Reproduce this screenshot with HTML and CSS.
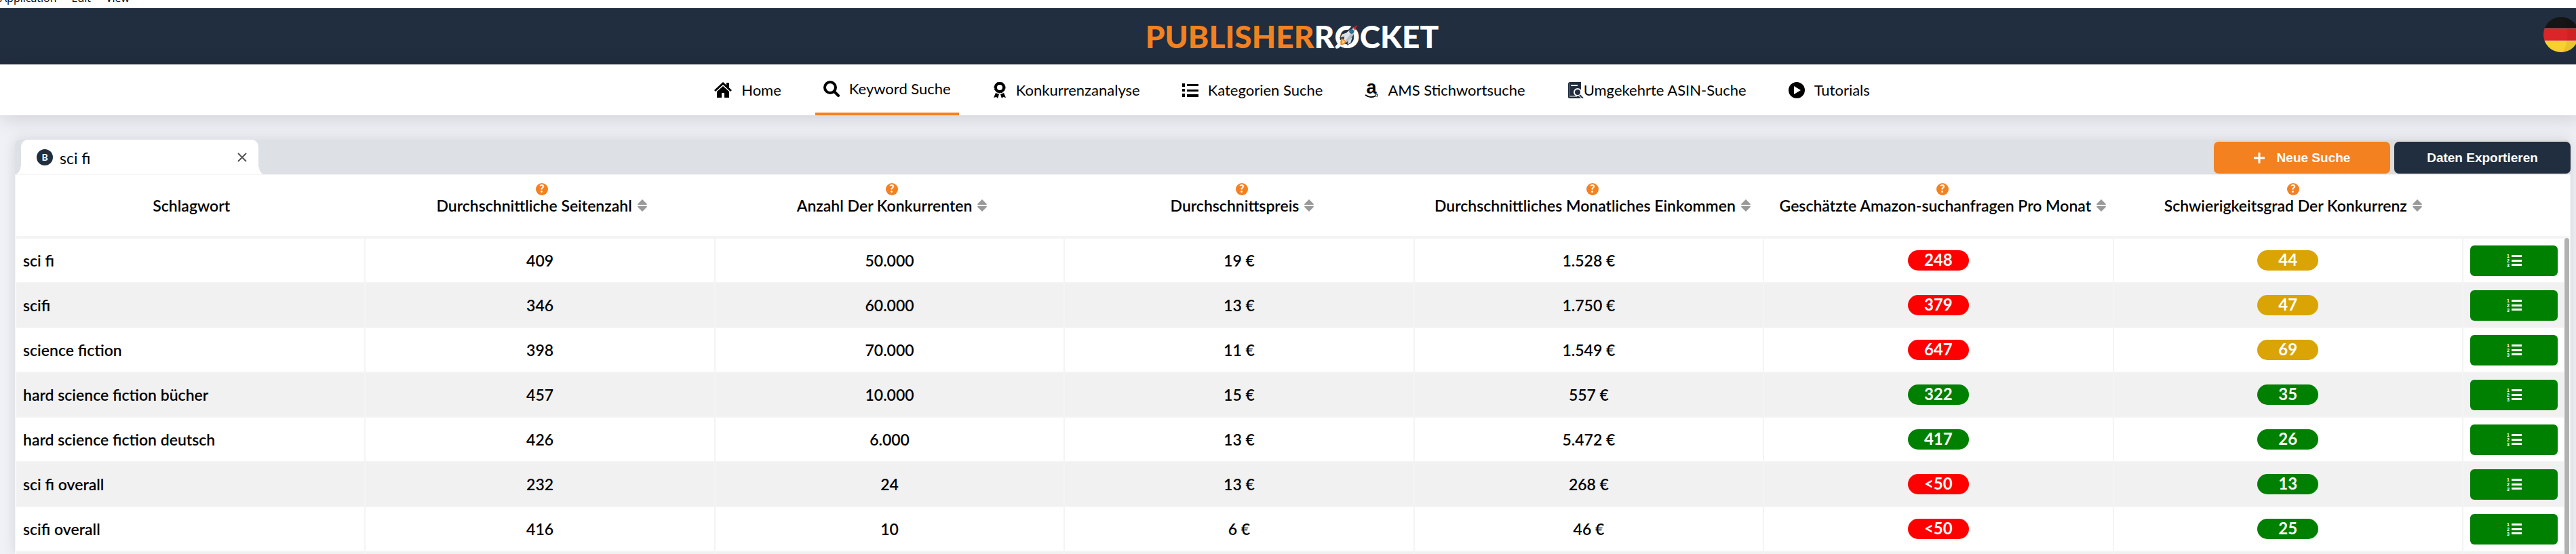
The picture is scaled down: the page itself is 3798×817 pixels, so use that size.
FILE: index.html
```html
<!DOCTYPE html>
<html lang="de">
<head>
  <meta charset="utf-8">
  <meta name="viewport" content="width=device-width, initial-scale=1">
  <title>Publisher Rocket</title>
  <link rel="stylesheet" href="styles.css">
</head>
<body>

  <!-- icons -->
  <svg class="sprite" aria-hidden="true">
    <symbol id="i-home" viewBox="0 0 26 24">
      <path d="M1 13 L13 2 L25 13" fill="none" stroke="currentColor" stroke-width="3"/>
      <path d="M18 1h4v8l-4-4z"/>
      <path d="M4 14 L13 6 L22 14 V23 H15 V16 H11 V23 H4z"/>
    </symbol>
    <symbol id="i-search" viewBox="0 0 24 24">
      <circle cx="10" cy="10" r="8" fill="none" stroke="currentColor" stroke-width="4"/>
      <path d="M16 16 L22 22" stroke="currentColor" stroke-width="4" stroke-linecap="round"/>
    </symbol>
    <symbol id="i-award" viewBox="0 0 20 24">
      <circle cx="10" cy="8" r="6" fill="none" stroke="currentColor" stroke-width="4"/>
      <circle cx="10" cy="8" r="8" fill="none" stroke="currentColor" stroke-width="1" stroke-dasharray="3 1"/>
      <path d="M4 16 L9 18 L7 24 L5 22 L1 23z M16 16 L11 18 L13 24 L15 22 L19 23z"/>
    </symbol>
    <symbol id="i-list" viewBox="0 0 24 24">
      <path d="M0 2h4v5H0z M0 10h4v4H0z M0 17h4v5H0z M7 3h17v3H7z M7 11h17v3H7z M7 18h17v4H7z"/>
    </symbol>
    <symbol id="i-amazon" viewBox="0 0 20 24">
      <text class="amazon-a" x="10" y="17" text-anchor="middle">a</text>
      <path d="M1 19 Q9 25 17 20" fill="none" stroke="currentColor" stroke-width="2"/>
      <path d="M15 18 H19 L18 22" fill="none" stroke="currentColor" stroke-width="1"/>
    </symbol>
    <symbol id="i-asin" viewBox="0 0 24 24">
      <path d="M1 3 Q1 0 4 0 H20 V24 H3 Q1 24 1 22z" fill="#212e3f"/>
      <path d="M3 2v18" stroke="#6d7784"/>
      <path d="M5 5h10" stroke="#fff" stroke-width="2"/>
      <path d="M3 21h11" stroke="#fff" stroke-width="1"/>
      <circle cx="15" cy="15" r="5" fill="#212e3f" stroke="#fff" stroke-width="2"/>
      <path d="M18 19 L23 24" stroke="#fff" stroke-width="4"/>
      <path d="M18 19 L23 24" stroke="#212e3f" stroke-width="2"/>
    </symbol>
    <symbol id="i-play" viewBox="0 0 24 24">
      <path fill-rule="evenodd" d="M12 0a12 12 0 1 0 0 24a12 12 0 1 0 0-24z M8 6L18 12L8 18z"/>
    </symbol>
    <symbol id="i-help" viewBox="0 0 18 18">
      <circle cx="9" cy="9" r="9" fill="#f48120"/>
      <text class="help-mark" x="9" y="14" text-anchor="middle">?</text>
    </symbol>
    <symbol id="i-sort" viewBox="0 0 14 18">
      <path d="M7 0L14 7Q14 8 13 8H1Q0 8 0 7z M7 18L14 11Q14 10 13 10H1Q0 10 0 11z"/>
    </symbol>
    <symbol id="i-list-ol" viewBox="0 0 22 20">
      <path d="M7 2h15v3H7z M7 9h15v3H7z M7 15h15v3H7z"/>
      <text class="ol-num" x="0" y="6">1</text>
      <text class="ol-num" x="0" y="13">2</text>
      <text class="ol-num" x="0" y="20">3</text>
    </symbol>
  </svg>

  <div class="menubar">
    <span>Application</span>
    <span>Edit</span>
    <span>View</span>
  </div>

  <header class="header">
    <div class="logo">
      <span class="logo-publisher">PUBLISHER</span><span>R</span><span class="logo-o">O<svg class="logo-rocket" viewBox="0 0 40 40">
          <path d="M2 35 Q1 40 7 38 L15 30 L10 26z" fill="#fff"/>
          <path d="M11 26 L30 6" stroke="#212e3f" stroke-width="7"/>
          <path d="M21 13 L12 16 L9 22 L18 20z M29 20 L26 30 L20 33 L22 24z" fill="#d6dbe1" stroke="#212e3f" stroke-width="1"/>
          <path d="M15 25 Q16 11 33 6 Q31 21 19 29z" fill="#dfe3e8"/>
          <path d="M19 29 Q31 21 33 6 L17 27z" fill="#b7bec7"/>
          <path d="M29 6 L36 2 L33 10z" fill="#c4202e"/>
          <circle cx="27" cy="12" r="3" fill="#1f7fa3" stroke="#15506b"/>
          <path d="M12 22 L19 28 Q17 33 10 33 Q9 26 12 22z" fill="#f48120"/>
          <path d="M13 25 L17 28 Q15 31 12 31z" fill="#ffd27a"/>
        </svg></span><span>CKET</span>
    </div>
    <svg class="flag" viewBox="0 0 52 52" role="img" aria-label="Deutsch">
      <clipPath id="flag-round"><circle cx="26" cy="26" r="26"/></clipPath>
      <g clip-path="url(#flag-round)">
        <path d="M0 0h52v17H0z" fill="#151515"/>
        <path d="M0 17h52v18H0z" fill="#db2629"/>
        <path d="M0 35h52v17H0z" fill="#f9d02e"/>
        <path d="M29 0 Q42 26 29 52 H52 V0z" fill="#000" opacity="0.06"/>
        <path d="M0 17h52M0 35h52" stroke="#fff" opacity="0.3"/>
      </g>
    </svg>
  </header>

  <nav class="nav">
    <a href="#" class="nav-item"><svg class="icon-wide"><use href="#i-home"/></svg><span>Home</span></a>
    <a href="#" class="nav-item active"><svg class="icon"><use href="#i-search"/></svg><span>Keyword Suche</span></a>
    <a href="#" class="nav-item"><svg class="icon-narrow"><use href="#i-award"/></svg><span>Konkurrenzanalyse</span></a>
    <a href="#" class="nav-item"><svg class="icon"><use href="#i-list"/></svg><span>Kategorien Suche</span></a>
    <a href="#" class="nav-item"><svg class="icon-narrow"><use href="#i-amazon"/></svg><span>AMS Stichwortsuche</span></a>
    <a href="#" class="nav-item tight"><svg class="icon"><use href="#i-asin"/></svg><span>Umgekehrte ASIN-Suche</span></a>
    <a href="#" class="nav-item"><svg class="icon"><use href="#i-play"/></svg><span>Tutorials</span></a>
  </nav>

  <main class="panel">
    <div class="tabbar">
      <div class="tab">
        <span class="tab-badge">B</span>
        <span class="tab-title">sci fi</span>
        <button class="tab-close" aria-label="Tab schließen">
          <svg viewBox="0 0 14 14"><path d="M1 1L13 13M13 1L1 13"/></svg>
        </button>
      </div>
      <div class="actions">
        <button class="btn btn-new">
          <svg viewBox="0 0 16 16"><path d="M8 1V15M1 8H15"/></svg>Neue Suche
        </button>
        <button class="btn btn-export">Daten Exportieren</button>
      </div>
    </div>

    <div class="results">
      <table>
        <thead>
          <tr>
            <th><span class="label">Schlagwort</span></th>
            <th><svg class="help"><use href="#i-help"/></svg><span class="label">Durchschnittliche Seitenzahl<svg class="sort"><use href="#i-sort"/></svg></span></th>
            <th><svg class="help"><use href="#i-help"/></svg><span class="label">Anzahl Der Konkurrenten<svg class="sort"><use href="#i-sort"/></svg></span></th>
            <th><svg class="help"><use href="#i-help"/></svg><span class="label">Durchschnittspreis<svg class="sort"><use href="#i-sort"/></svg></span></th>
            <th><svg class="help"><use href="#i-help"/></svg><span class="label">Durchschnittliches Monatliches Einkommen<svg class="sort"><use href="#i-sort"/></svg></span></th>
            <th><svg class="help"><use href="#i-help"/></svg><span class="label">Geschätzte Amazon-suchanfragen Pro Monat<svg class="sort"><use href="#i-sort"/></svg></span></th>
            <th><svg class="help"><use href="#i-help"/></svg><span class="label">Schwierigkeitsgrad Der Konkurrenz<svg class="sort"><use href="#i-sort"/></svg></span></th>
            <th></th>
          </tr>
        </thead>
        <tbody>
          <tr>
            <td>sci fi</td><td>409</td><td>50.000</td><td>19 €</td><td>1.528 €</td>
            <td><span class="pill red">248</span></td><td><span class="pill amber">44</span></td>
            <td><button class="analyze" aria-label="Analysieren"><svg><use href="#i-list-ol"/></svg></button></td>
          </tr>
          <tr>
            <td>scifi</td><td>346</td><td>60.000</td><td>13 €</td><td>1.750 €</td>
            <td><span class="pill red">379</span></td><td><span class="pill amber">47</span></td>
            <td><button class="analyze" aria-label="Analysieren"><svg><use href="#i-list-ol"/></svg></button></td>
          </tr>
          <tr>
            <td>science fiction</td><td>398</td><td>70.000</td><td>11 €</td><td>1.549 €</td>
            <td><span class="pill red">647</span></td><td><span class="pill amber">69</span></td>
            <td><button class="analyze" aria-label="Analysieren"><svg><use href="#i-list-ol"/></svg></button></td>
          </tr>
          <tr>
            <td>hard science fiction bücher</td><td>457</td><td>10.000</td><td>15 €</td><td>557 €</td>
            <td><span class="pill green">322</span></td><td><span class="pill green">35</span></td>
            <td><button class="analyze" aria-label="Analysieren"><svg><use href="#i-list-ol"/></svg></button></td>
          </tr>
          <tr>
            <td>hard science fiction deutsch</td><td>426</td><td>6.000</td><td>13 €</td><td>5.472 €</td>
            <td><span class="pill green">417</span></td><td><span class="pill green">26</span></td>
            <td><button class="analyze" aria-label="Analysieren"><svg><use href="#i-list-ol"/></svg></button></td>
          </tr>
          <tr>
            <td>sci fi overall</td><td>232</td><td>24</td><td>13 €</td><td>268 €</td>
            <td><span class="pill red">&lt;50</span></td><td><span class="pill green">13</span></td>
            <td><button class="analyze" aria-label="Analysieren"><svg><use href="#i-list-ol"/></svg></button></td>
          </tr>
          <tr>
            <td>scifi overall</td><td>416</td><td>10</td><td>6 €</td><td>46 €</td>
            <td><span class="pill red">&lt;50</span></td><td><span class="pill green">25</span></td>
            <td><button class="analyze" aria-label="Analysieren"><svg><use href="#i-list-ol"/></svg></button></td>
          </tr>
          <tr>
            <td></td><td></td><td></td><td></td><td></td><td></td><td></td><td></td>
          </tr>
        </tbody>
      </table>
      <div class="scrollbar"></div>
    </div>
  </main>

</body>
</html>
```
FILE: styles.css
```css
* {
  box-sizing: border-box;
}

body {
  display: flex;
  flex-direction: column;
  margin: 0;
  height: 100vh;
  overflow: hidden;
  background: #f0f1f7;
  color: #000;
  font-family: Lato, sans-serif;
  font-size: 24px;
  line-height: 30px;
}

button {
  border: 0;
  padding: 0;
  cursor: pointer;
}

svg {
  fill: currentColor;
  flex: none;
}

.sprite {
  display: none;
}

/* window menu */
.menubar {
  display: flex;
  flex: none;
  align-items: flex-end;
  gap: 22px;
  height: 12px;
  padding-bottom: 5px;
  overflow: hidden;
  background: #fff;
  font-family: "Open Sans", sans-serif;
  font-size: 16px;
  line-height: 20px;
}

/* header */
.header {
  display: grid;
  flex: none;
  grid-template-columns: 1fr auto 1fr;
  align-items: center;
  width: calc(100% + 12px);
  height: 83px;
  padding: 0 8px;
  background: #212e3f;
}

.logo {
  grid-column: 2;
  display: flex;
  color: #fff;
  font-size: 46px;
  font-weight: 900;
  line-height: 60px;
}

.logo-publisher {
  color: #f48120;
}

.logo-o {
  position: relative;
}

.logo-rocket {
  position: absolute;
  left: 0;
  top: 11px;
  width: 38px;
  height: 38px;
}

.flag {
  justify-self: end;
  align-self: start;
  width: 52px;
  height: 52px;
  margin-top: 13px;
}

/* navigation */
.nav {
  position: relative;
  display: flex;
  flex: none;
  justify-content: center;
  gap: 38px;
  width: calc(100% + 12px);
  height: 75px;
  background: #fff;
  box-shadow: 0 4px 32px rgba(0, 0, 0, 0.15);
  font-size: 22px;
}

.nav-item {
  display: flex;
  align-items: center;
  gap: 14px;
  padding: 0 12px;
  color: #000;
  text-decoration: none;
}

.nav-item.active {
  border-bottom: 4px solid #f48120;
}

.nav-item.tight {
  gap: 0;
}

.icon {
  width: 24px;
  height: 24px;
}

.icon-wide {
  width: 26px;
  height: 24px;
}

.icon-narrow {
  width: 20px;
  height: 24px;
}

.amazon-a {
  font: bold 27px "Liberation Sans", sans-serif;
}

.help-mark {
  fill: #fff;
  font: 900 16px Lato, sans-serif;
}

.ol-num {
  font: bold 7px "Liberation Sans", sans-serif;
}

/* panel */
.panel {
  display: flex;
  flex: 1;
  flex-direction: column;
  min-height: 0;
  margin: 36px 8px 0 22px;
  border-radius: 8px 8px 0 0;
  box-shadow: 0 0 20px rgba(0, 0, 0, 0.12);
}

.tabbar {
  display: flex;
  flex: none;
  justify-content: space-between;
  height: 51px;
  padding-left: 9px;
  border-radius: 8px 8px 0 0;
  background: #dde0e5;
}

.tab {
  position: relative;
  display: flex;
  align-items: center;
  width: 350px;
  padding: 0 17px 0 23px;
  border-radius: 10px 10px 0 0;
  background: #fff;
}

/* curved feet of the tab */
.tab::before,
.tab::after {
  content: "";
  position: absolute;
  bottom: 0;
  width: 8px;
  height: 16px;
}

.tab::before {
  right: 100%;
  background: radial-gradient(ellipse 8px 16px at 0 0, transparent 98%, #fff);
}

.tab::after {
  left: 100%;
  background: radial-gradient(ellipse 8px 16px at 100% 0, transparent 98%, #fff);
}

.tab-badge {
  width: 24px;
  height: 24px;
  border-radius: 50%;
  background: #212e3f;
  color: #fff;
  font-size: 14px;
  font-weight: bold;
  line-height: 24px;
  text-align: center;
}

.tab-title {
  flex: 1;
  padding: 2px 0 0 10px;
  font-size: 23px;
}

.tab-close {
  display: flex;
  background: none;
}

.tab-close svg {
  width: 14px;
  height: 14px;
  fill: none;
  stroke: #555;
  stroke-width: 2;
}

.actions {
  display: flex;
  gap: 6px;
  padding: 3px 0 1px;
  border-top-right-radius: 8px;
  background: #dcdcdc;
}

.btn {
  display: flex;
  align-items: center;
  justify-content: center;
  gap: 18px;
  width: 260px;
  border-radius: 7px;
  color: #fff;
  font: bold 19px "Liberation Sans", Arial, sans-serif;
}

.btn-new {
  background: #f48120;
}

.btn-new svg {
  width: 16px;
  height: 16px;
  stroke: #fff;
  stroke-width: 3;
  stroke-linecap: round;
}

.btn-export {
  background: #212e3f;
}

/* results table */
.results {
  position: relative;
  flex: 1;
  min-height: 0;
  padding: 0 2px 0 1px;
  overflow: hidden;
  border: 1px solid #f4f4f4;
  border-width: 1px 1px 0;
  background: #fff;
}

table,
thead,
tbody {
  display: block;
}

tr {
  display: grid;
  grid-template-columns: repeat(7, 1fr) 148px;
}

thead tr {
  height: 94px;
  border-bottom: 4px solid #f4f4f4;
}

th {
  display: flex;
  flex-direction: column;
  align-items: center;
  justify-content: flex-end;
  padding: 0 0 30px;
  font-size: 23px;
  font-weight: 600;
  white-space: nowrap;
}

.label {
  display: flex;
  align-items: center;
  gap: 8px;
}

.help {
  width: 18px;
  height: 18px;
}

.sort {
  width: 14px;
  height: 18px;
  color: #999;
}

tbody {
  margin-right: 7px;
}

tbody tr {
  height: 66px;
  border-bottom: 2px solid #f4f4f4;
}

tbody tr:nth-child(even) {
  background: #f1f1f1;
}

td {
  display: flex;
  align-items: center;
  justify-content: center;
  padding: 0;
  border-right: 2px solid #f4f4f4;
  font-size: 23px;
  font-weight: 600;
}

td:first-child {
  justify-content: flex-start;
  padding-left: 10px;
}

td:last-child {
  padding: 0 9px 0 10px;
  border-right: 0;
}

.pill {
  width: 90px;
  height: 30px;
  border-radius: 15px;
  color: #fff;
  font-size: 24px;
  font-weight: bold;
  line-height: 28px;
  text-align: center;
}

.red {
  background: #f00;
}

.amber {
  background: #d9a404;
}

.green {
  background: #008000;
}

.analyze {
  display: flex;
  align-items: center;
  justify-content: center;
  width: 100%;
  height: 45px;
  border-radius: 6px;
  background: #008000;
  color: #fff;
}

.analyze svg {
  width: 22px;
  height: 20px;
}

.scrollbar {
  position: absolute;
  top: 93px;
  right: 1px;
  bottom: 0;
  width: 7px;
  border-radius: 4px 4px 0 0;
  background: #b1b1b1;
}
```
